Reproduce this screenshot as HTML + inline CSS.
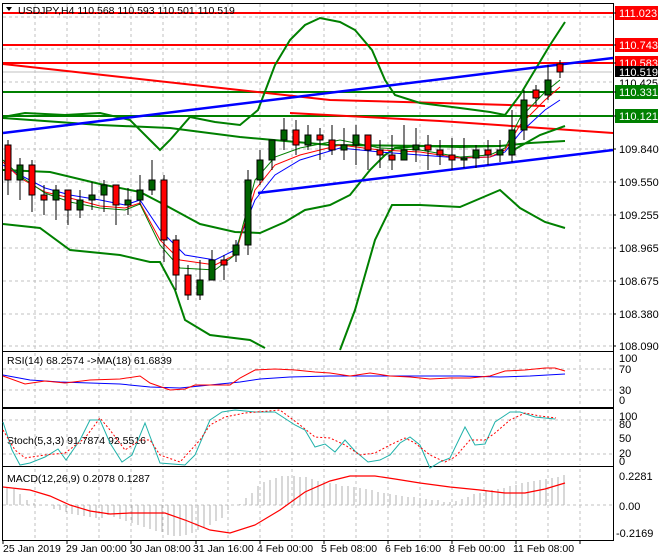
<!DOCTYPE html>
<html><head><meta charset="utf-8"><style>
html,body{margin:0;padding:0;background:#fff;}
svg{display:block;font-family:"Liberation Sans",sans-serif;}
</style></head><body>
<svg width="660" height="560" viewBox="0 0 660 560" xmlns="http://www.w3.org/2000/svg">
<rect width="660" height="560" fill="#fff"/>
<g stroke="#c0c0c0" stroke-dasharray="3,3" stroke-width="1">
<path d="M35 4V350M67 4V350M99 4V350M131 4V350M163 4V350M196 4V350M228 4V350M260 4V350M292 4V350M324 4V350M356 4V350M388 4V350M420 4V350M452 4V350M484 4V350M516 4V350M548 4V350M580 4V350"/>
<path d="M3 17H612M3 49H612M3 82H612M3 116H612M3 149H612M3 182H612M3 215H612M3 248H612M3 281H612M3 314H612M3 346H612"/>
<path d="M35 353V406M67 353V406M99 353V406M131 353V406M163 353V406M196 353V406M228 353V406M260 353V406M292 353V406M324 353V406M356 353V406M388 353V406M420 353V406M452 353V406M484 353V406M516 353V406M548 353V406M580 353V406M3 369H612M3 390H612"/>
<path d="M35 410V465M67 410V465M99 410V465M131 410V465M163 410V465M196 410V465M228 410V465M260 410V465M292 410V465M324 410V465M356 410V465M388 410V465M420 410V465M452 410V465M484 410V465M516 410V465M548 410V465M580 410V465M3 420H612M3 454H612"/>
<path d="M35 469V538M67 469V538M99 469V538M131 469V538M163 469V538M196 469V538M228 469V538M260 469V538M292 469V538M324 469V538M356 469V538M388 469V538M420 469V538M452 469V538M484 469V538M516 469V538M548 469V538M580 469V538M3 505H612"/>
</g>
<line x1="3" y1="72" x2="612" y2="72" stroke="#c0c0c0"/>
<g fill="none">
<path d="M3 13H613M3 45H613M3 63H613" stroke="#ff0000" stroke-width="2"/>
<path d="M3 92H613M3 116H613" stroke="#008000" stroke-width="2"/>
<path d="M3 64L330 100L440 103L545 106" stroke="#ff0000" stroke-width="2"/>
<path d="M290 113L440 121L613 133" stroke="#ff0000" stroke-width="2"/>
<path d="M3 117L25 113L65 115L100 113L130 120L150 140L160 150L170 140L190 117L215 122L240 125L258 110L275 65L290 40L305 25L320 18L340 22L355 30L372 50L385 80L395 95L420 103L460 108L490 112L505 115L520 95L535 70L550 45L565 22" stroke="#008000" stroke-width="2"/>
<path d="M3 224L40 228L70 250L120 255L150 262L160 262L175 290L185 320L210 335L250 340L265 348M340 350L355 310L375 240L392 205L420 205L460 207L500 190L520 208L545 222L565 228" stroke="#008000" stroke-width="2"/>
<path d="M3 170L50 172L100 184L140 192L165 205L200 224L235 232L260 233L285 222L305 210L330 205L350 195L370 170L385 155L395 148L420 146L460 147L500 146L530 143L565 141" stroke="#008000" stroke-width="2"/>
<path d="M3 118L100 125L170 128L240 137L330 145L430 146L500 146M510 152L540 135L565 126" stroke="#008000" stroke-width="2"/>
<path d="M3 133L613 58" stroke="#0000ff" stroke-width="2.5"/>
<path d="M258 193L613 150" stroke="#0000ff" stroke-width="2.5"/>
</g>
<g fill="none" stroke-width="1">
<path d="M3 165L20 175L45 188L70 195L100 200L125 205L140 200L160 230L185 255L215 260L235 250L255 200L275 175L300 160L340 148L380 152L420 155L460 158L490 157L505 152L520 133L545 110L560 100" stroke="#0000ff"/>
<path d="M3 162L20 178L45 192L70 198L100 206L125 208L140 203L160 240L180 260L215 265L235 255L255 190L275 165L300 155L340 145L380 150L420 152L460 158L490 157L505 150L520 125L545 100L560 87" stroke="#ff0000"/>
<path d="M3 160L20 176L45 193L70 202L100 208L125 210L140 204L160 245L180 268L215 270L235 255L255 180L275 157L300 148L340 140L380 148L420 150L460 157L490 155L505 148L520 118L545 92L560 80" stroke="#008000"/>
</g>
<g stroke="#000" stroke-width="1">
<path d="M8 140V195M20 158V200M32 160V212M44 185V215M56 185V220M68 190V225M80 190V218M92 182V210M104 180V212M116 185V225M128 188V215M140 175V205M152 160V195M164 175V262M176 235V290M188 265V300M200 260V300M212 250V275M224 255V280M236 240V262M248 170V255M260 150V185M272 140V170M284 118V150M296 120V155M308 125V150M320 128V160M332 125V155M344 128V160M356 125V165M368 140V170M380 140V168M392 135V170M404 125V160M416 128V162M428 135V170M440 140V165M452 138V170M464 138V168M476 145V168M488 140V165M500 140V162M512 110V162M524 90V140M536 85V105M548 65V100M560 60V78"/>
</g>
<g stroke="#000" stroke-width="1">
<rect x="5" y="145" width="6" height="35" fill="#ff0000"/>
<rect x="17" y="165" width="6" height="15" fill="#006400"/>
<rect x="29" y="165" width="6" height="30" fill="#ff0000"/>
<rect x="41" y="195" width="6" height="5" fill="#ff0000"/>
<rect x="53" y="190" width="6" height="10" fill="#006400"/>
<rect x="65" y="190" width="6" height="20" fill="#ff0000"/>
<rect x="77" y="200" width="6" height="10" fill="#006400"/>
<rect x="89" y="195" width="6" height="5" fill="#006400"/>
<rect x="101" y="185" width="6" height="10" fill="#006400"/>
<rect x="113" y="185" width="6" height="20" fill="#ff0000"/>
<rect x="125" y="200" width="6" height="5" fill="#006400"/>
<rect x="137" y="190" width="6" height="10" fill="#006400"/>
<rect x="149" y="180" width="6" height="10" fill="#006400"/>
<rect x="161" y="180" width="6" height="60" fill="#ff0000"/>
<rect x="173" y="240" width="6" height="35" fill="#ff0000"/>
<rect x="185" y="275" width="6" height="20" fill="#ff0000"/>
<rect x="197" y="280" width="6" height="15" fill="#006400"/>
<rect x="209" y="260" width="6" height="20" fill="#006400"/>
<rect x="221" y="260" width="6" height="5" fill="#ff0000"/>
<rect x="233" y="245" width="6" height="10" fill="#006400"/>
<rect x="245" y="180" width="6" height="65" fill="#006400"/>
<rect x="257" y="160" width="6" height="20" fill="#006400"/>
<rect x="269" y="140" width="6" height="20" fill="#006400"/>
<rect x="281" y="130" width="6" height="10" fill="#006400"/>
<rect x="293" y="130" width="6" height="15" fill="#ff0000"/>
<rect x="305" y="135" width="6" height="10" fill="#006400"/>
<rect x="317" y="135" width="6" height="5" fill="#ff0000"/>
<rect x="329" y="140" width="6" height="10" fill="#ff0000"/>
<rect x="341" y="145" width="6" height="5" fill="#006400"/>
<rect x="353" y="135" width="6" height="10" fill="#006400"/>
<rect x="365" y="135" width="6" height="15" fill="#ff0000"/>
<rect x="377" y="150" width="6" height="5" fill="#ff0000"/>
<rect x="389" y="155" width="6" height="5" fill="#ff0000"/>
<rect x="401" y="150" width="6" height="10" fill="#006400"/>
<rect x="413" y="145" width="6" height="5" fill="#006400"/>
<rect x="425" y="145" width="6" height="5" fill="#ff0000"/>
<rect x="437" y="150" width="6" height="5" fill="#ff0000"/>
<rect x="449" y="155" width="6" height="5" fill="#ff0000"/>
<rect x="461" y="158" width="6" height="2" fill="#006400"/>
<rect x="473" y="150" width="6" height="8" fill="#006400"/>
<rect x="485" y="150" width="6" height="5" fill="#ff0000"/>
<rect x="497" y="150" width="6" height="5" fill="#006400"/>
<rect x="509" y="130" width="6" height="25" fill="#006400"/>
<rect x="521" y="100" width="6" height="30" fill="#006400"/>
<rect x="533" y="90" width="6" height="8" fill="#ff0000"/>
<rect x="545" y="80" width="6" height="15" fill="#006400"/>
<rect x="557" y="64" width="6" height="8" fill="#ff0000"/>
</g>
<g fill="none" stroke="#000" stroke-width="1">
<rect x="2.5" y="3.5" width="611" height="348"/>
<rect x="2.5" y="351.5" width="611" height="56"/>
<rect x="2.5" y="408.5" width="611" height="58"/>
<rect x="2.5" y="466.5" width="611" height="74"/>
</g>
<path d="M6 7L12 7L9 11Z" fill="#000"/>
<text x="18" y="14" font-size="10.5" fill="#000">USDJPY,H4  110.568 110.593 110.501 110.519</text>
<g font-size="11">
<rect x="615" y="6" width="43" height="14" fill="#ff0000"/><text x="619" y="17" fill="#fff">111.023</text>
<rect x="615" y="38" width="43" height="14" fill="#ff0000"/><text x="619" y="49" fill="#fff">110.743</text>
<rect x="615" y="56" width="43" height="14" fill="#ff0000"/><text x="619" y="67" fill="#fff">110.583</text>
<rect x="615" y="66" width="43" height="11" fill="#000"/><text x="619" y="76" fill="#fff">110.519</text>
<text x="619" y="87" fill="#000">110.425</text>
<rect x="615" y="85" width="43" height="14" fill="#008000"/><text x="619" y="96" fill="#fff">110.331</text>
<rect x="615" y="109" width="43" height="14" fill="#008000"/><text x="619" y="120" fill="#fff">110.121</text>
<text x="619" y="153" fill="#000">109.840</text>
<text x="619" y="186" fill="#000">109.550</text>
<text x="619" y="219" fill="#000">109.255</text>
<text x="619" y="252" fill="#000">108.965</text>
<text x="619" y="285" fill="#000">108.675</text>
<text x="619" y="318" fill="#000">108.380</text>
<text x="619" y="350" fill="#000">108.090</text>
<text x="619" y="362" fill="#000">100</text>
<text x="619" y="373" fill="#000">70</text>
<text x="619" y="394" fill="#000">30</text>
<text x="619" y="404" fill="#000">0</text>
<text x="619" y="420" fill="#000">100</text>
<text x="619" y="428" fill="#000">80</text>
<text x="619" y="442" fill="#000">50</text>
<text x="619" y="457" fill="#000">20</text>
<text x="619" y="465" fill="#000">0</text>
<text x="619" y="480" fill="#000">0.2281</text>
<text x="619" y="510" fill="#000">0.00</text>
<text x="616" y="537" fill="#000">-0.2169</text>
</g>
<g stroke="#000"><path d="M613 13h3M613 45h3M613 63h3M613 92h3M613 116h3M613 149h3M613 182h3M613 215h3M613 248h3M613 281h3M613 314h3M613 346h3"/></g>
<text x="7" y="364" font-size="10.5" fill="#000">RSI(14) 68.2574  -&gt;MA(18) 61.6839</text>
<path d="M3 375L30 380L60 382L90 383L120 384L150 387L180 388L210 385L240 382L260 379L290 377L330 376L370 376L410 376L460 376L500 377L530 376L565 374" fill="none" stroke="#0000ff"/>
<path d="M3 376L25 384L45 381L65 383L90 380L120 379L140 376L150 383L170 390L185 389L195 385L230 385L240 378L255 370L275 369L295 370L315 372L330 373L350 376L370 373L390 376L410 377L430 379L450 378L470 378L490 376L505 371L525 370L545 368L555 368L565 371" fill="none" stroke="#ff0000"/>
<text x="7" y="444" font-size="10.5" fill="#000">Stoch(5,3,3) 91.7874 92.5516</text>
<path d="M3 422L12 450L20 465L30 463L45 457L58 449L66 460L80 440L90 420L100 420L110 443L122 462L132 455L145 423L160 463L185 465L195 455L210 420L222 412L235 410L255 412L275 412L295 425L305 430L315 447L325 444L335 452L345 440L355 451L368 462L380 460L390 455L400 443L410 437L420 445L430 468L440 462L450 458L465 427L475 445L485 444L495 422L510 412L520 412L535 417L555 419" fill="none" stroke="#20b2aa"/>
<path d="M3 430L15 450L25 458L45 455L65 453L85 438L100 418L110 430L125 450L140 440L150 440L160 455L180 462L200 440L210 425L225 417L245 413L280 410L300 425L315 437L330 438L345 445L360 455L375 453L390 445L405 438L415 443L430 455L445 462L455 457L470 440L485 440L495 433L510 420L525 413L540 416L556 418" fill="none" stroke="#ff0000" stroke-dasharray="2,2"/>
<g stroke="#b0b0b0" stroke-width="1">
<path d="M7 505V487M14 505V489M20 505V494M27 505V500M34 505V503M54 505V509M60 505V510M66 505V512M72 505V514M78 505V515M84 505V516M90 505V517M96 505V518M102 505V518M108 505V515M114 505V517M120 505V519M126 505V521M132 505V523M138 505V525M144 505V527M150 505V529M156 505V531M162 505V532M168 505V535M174 505V536M180 505V536M186 505V535M192 505V533M198 505V530M204 505V528M210 505V525M216 505V521M222 505V518M228 505V510M234 505V505M240 505V504M246 505V498M252 505V493M258 505V486M264 505V482M270 505V480M276 505V478M282 505V476M288 505V476M294 505V476M300 505V477M306 505V477M312 505V479M318 505V481M324 505V482M330 505V483M336 505V484M342 505V486M348 505V486M354 505V487M360 505V488M366 505V489M372 505V490M378 505V492M384 505V493M390 505V494M396 505V495M402 505V496M408 505V497M414 505V497M420 505V498M426 505V499M432 505V500M438 505V500M444 505V502M450 505V502M456 505V501M462 505V499M468 505V497M474 505V494M480 505V493M486 505V491M492 505V490M498 505V489M504 505V488M510 505V486M516 505V485M522 505V483M528 505V482M534 505V481M540 505V480M546 505V479M552 505V478M558 505V477M564 505V475"/>
</g>
<text x="7" y="482" font-size="10.5" fill="#000">MACD(12,26,9) 0.2078 0.1287</text>
<path d="M3 487L30 490L50 496L70 505L90 511L110 514L130 513L165 513L185 520L210 530L230 533L255 525L280 510L305 492L330 481L350 476L375 476L395 479L420 483L450 487L480 490L505 493L525 493L545 489L565 483" fill="none" stroke="#ff0000" stroke-width="1.2"/>
<g font-size="10.5" fill="#000">
<text x="3" y="552">25 Jan 2019</text>
<text x="66" y="552">29 Jan 00:00</text>
<text x="130" y="552">30 Jan 08:00</text>
<text x="193" y="552">31 Jan 16:00</text>
<text x="257" y="552">4 Feb 00:00</text>
<text x="321" y="552">5 Feb 08:00</text>
<text x="385" y="552">6 Feb 16:00</text>
<text x="449" y="552">8 Feb 00:00</text>
<text x="513" y="552">11 Feb 08:00</text>
</g>
<g stroke="#000"><path d="M3 541v3M67 541v3M131 541v3M196 541v3M260 541v3M324 541v3M388 541v3M452 541v3M516 541v3M580 541v3"/></g>
</svg>
</body></html>
